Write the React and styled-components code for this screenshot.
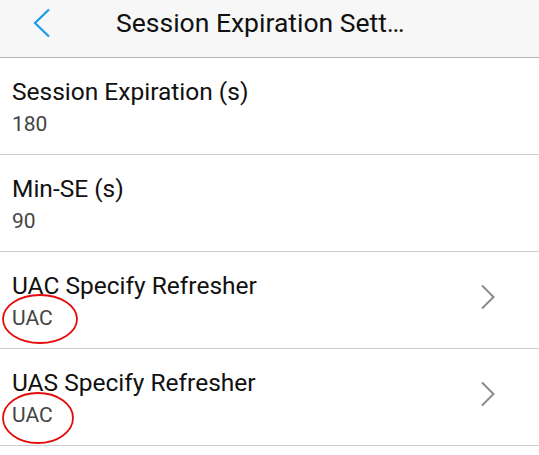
import styled, { createGlobalStyle } from 'styled-components';

const GlobalStyle = createGlobalStyle`
  html, body {
    margin: 0;
    padding: 0;
    background: #ffffff;
    font-family: Roboto, "Noto Sans", sans-serif;
  }
`;

const Page = styled.div`
  width: 539px;
  height: 455px;
  overflow: hidden;
  background: #ffffff;
`;

const Header = styled.header`
  display: flex;
  align-items: flex-start;
  height: 57px;
  background: #f7f7f7;
  border-bottom: 1px solid #b4b4b4;
`;

const BackButton = styled.button`
  display: flex;
  align-items: center;
  justify-content: flex-start;
  width: 84px;
  height: 46px;
  margin: 0;
  padding: 0 0 0 32px;
  border: none;
  background: none;
  box-sizing: border-box;
`;

const Title = styled.h1`
  margin: 0 0 0 32px;
  font-size: 26.5px;
  font-weight: 400;
  line-height: 46px;
  color: #111;
  white-space: nowrap;
`;

const List = styled.ul`
  list-style: none;
  margin: 0;
  padding: 0;
`;

const Row = styled.li`
  position: relative;
  display: flex;
  align-items: flex-start;
  justify-content: space-between;
  height: 97px;
  box-sizing: border-box;
  padding: 20px 0 0 12px;
  border-bottom: 1px solid #cdcdcd;
`;

const Text = styled.div`
  display: flex;
  flex-direction: column;
`;

const Label = styled.span`
  font-size: 24.5px;
  line-height: 28px;
  color: #111;
`;

const Value = styled.span`
  margin-top: 6px;
  font-size: 21px;
  line-height: 24px;
  color: #444;
`;

const Chevron = styled.svg`
  margin: 12px 43px 0 0;
`;

const Mark = styled.svg`
  position: absolute;
  left: 0;
  top: ${(p) => p.$top}px;
  pointer-events: none;
`;

const rows = [
  { label: 'Session Expiration (s)', value: '180' },
  { label: 'Min-SE (s)', value: '90' },
  { label: 'UAC Specify Refresher', value: 'UAC', link: true, mark: { top: 40, rx: 37, ry: 24 } },
  { label: 'UAS Specify Refresher', value: 'UAC', link: true, mark: { top: 41, rx: 35, ry: 25 } },
];

export default function App() {
  return (
    <Page>
      <GlobalStyle />
      <Header>
        <BackButton aria-label="Back">
          <svg width="20" height="30" viewBox="0 0 20 30">
            <path d="M17 1.5 L3 15 L17 28.5" fill="none" stroke="#1a9be6" strokeWidth="2.2" />
          </svg>
        </BackButton>
        <Title>Session Expiration Sett…</Title>
      </Header>
      <List>
        {rows.map((r) => (
          <Row key={r.label}>
            <Text>
              <Label>{r.label}</Label>
              <Value>{r.value}</Value>
            </Text>
            {r.link && (
              <Chevron width="16" height="26" viewBox="0 0 16 26">
                <path d="M2 1.5 L13.5 13 L2 24.5" fill="none" stroke="#8a8a8a" strokeWidth="2" />
              </Chevron>
            )}
            {r.mark && (
              <Mark $top={r.mark.top} width={r.mark.rx * 2 + 6} height={r.mark.ry * 2 + 6}>
                <ellipse
                  cx={r.mark.rx + 3}
                  cy={r.mark.ry + 3}
                  rx={r.mark.rx}
                  ry={r.mark.ry}
                  fill="none"
                  stroke="#e30c0c"
                  strokeWidth="1.8"
                />
              </Mark>
            )}
          </Row>
        ))}
      </List>
    </Page>
  );
}
